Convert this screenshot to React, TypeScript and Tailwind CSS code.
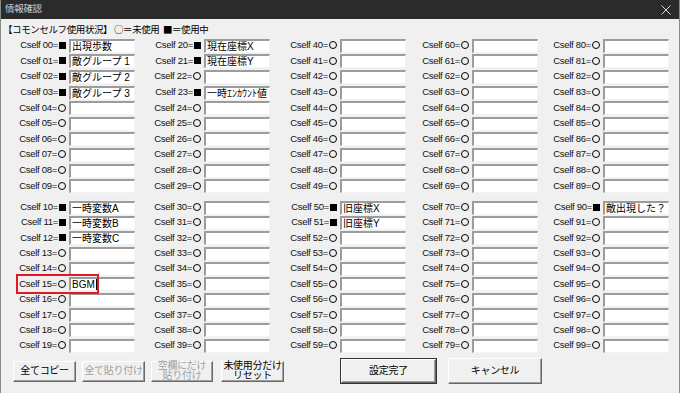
import React from "react";

const names: Record<number, string> = {
  0: "出現歩数",
  1: "敵グループ 1",
  2: "敵グループ 2",
  3: "敵グループ 3",
  10: "一時変数A",
  11: "一時変数B",
  12: "一時変数C",
  15: "BGM",
  20: "現在座標X",
  21: "現在座標Y",
  23: "一時ｴﾝｶｳﾝﾄ値",
  50: "旧座標X",
  51: "旧座標Y",
  90: "敵出現した？",
};

const used = new Set([0, 1, 2, 3, 10, 11, 12, 20, 21, 23, 50, 51, 90]);

const colWidths = ["w-[135px]", "w-[136px]", "w-[132px]", "w-[131px]", "w-[116px]"];

function Mark({ on }: { on: boolean }) {
  return on ? (
    <span className="inline-block shrink-0 w-[7px] h-[7px] bg-black ml-[1px]" />
  ) : (
    <span className="inline-block shrink-0 w-[8px] h-[8px] rounded-full border border-black ml-[1px]" />
  );
}

function Row({ n, h }: { n: number; h: string }) {
  const text = names[n];
  return (
    <div className={`flex items-center ${h}`}>
      <div className="w-[49px] shrink-0 flex items-center justify-end pr-[3px] text-[9.5px] leading-[12px] tracking-[-0.3px] text-[#111] whitespace-nowrap -mt-[1px]">
        <span>Cself {String(n).padStart(2, "0")}=</span>
        <Mark on={used.has(n)} />
      </div>
      <div className="w-[66px] h-[14px] shrink-0 bg-white border-t-2 border-l-2 border-t-[#9c9c9c] border-l-[#9c9c9c] border-b border-r border-b-[#f4f4f4] border-r-[#f4f4f4] pl-[1px] text-[10px] leading-[11px] text-black whitespace-nowrap overflow-hidden flex items-start">
        {text}
        {n === 15 && <span className="inline-block w-px h-[11px] bg-black ml-[1px]" />}
      </div>
    </div>
  );
}

function Group({ g, h }: { g: number; h: string }) {
  return (
    <div className="flex pl-[19px]">
      {[0, 1, 2, 3, 4].map((c) => (
        <div key={c} className={`flex flex-col shrink-0 ${colWidths[c]}`}>
          {Array.from({ length: 10 }, (_, r) => (
            <Row key={r} n={c * 20 + g * 10 + r} h={h} />
          ))}
        </div>
      ))}
    </div>
  );
}

function Btn({
  children,
  disabled,
  className,
}: {
  children: React.ReactNode;
  disabled?: boolean;
  className?: string;
}) {
  return (
    <div
      className={`flex flex-col items-center justify-center text-center whitespace-nowrap bg-[#f0f0f0] border-t border-l border-t-white border-l-white border-r border-b border-r-[#696969] border-b-[#696969] shadow-[inset_-1px_-1px_0_#a0a0a0] text-[10px] leading-[10px] tracking-[-0.3px] ${
        disabled ? "text-[#a0a0a0]" : "text-black"
      } ${className ?? ""}`}
    >
      {children}
    </div>
  );
}

export default function App() {
  return (
    <div className="relative w-[680px] h-[393px] overflow-hidden bg-[#f0f0f0] border-l border-r border-[#8a8a8a] font-['Liberation_Sans','Noto_Sans_CJK_JP',sans-serif]">
      {/* タイトルバー */}
      <div className="h-[19px] bg-[#2b2b2b] flex items-center justify-between pl-[4px] pr-[7px]">
        <span className="text-[9.5px] text-[#cfcfcf] tracking-[-0.3px]">情報確認</span>
        <svg width="10" height="10" viewBox="0 0 10 10" className="mr-[1px]">
          <path d="M0.5 0.5 L9.5 9.5 M9.5 0.5 L0.5 9.5" stroke="#d8d8d8" strokeWidth="1" />
        </svg>
      </div>

      {/* 凡例 */}
      <div className="h-[19px] pl-[2px] flex items-center font-['Noto_Sans_CJK_JP',sans-serif] text-[9.5px] leading-[14px] tracking-[-0.4px] text-black whitespace-pre">
        {"【コモンセルフ使用状況】 ○＝未使用  ■＝使用中"}
      </div>

      <Group g={0} h="h-[15.6px]" />
      <div className="h-[6px]" />
      <Group g={1} h="h-[15.35px]" />

      {/* ボタン */}
      <div className="flex items-center h-[30px] mt-[3px] pl-[12px]">
        <Btn className="w-[63px] h-[21px]">全てコピー</Btn>
        <Btn disabled className="w-[63px] h-[21px] ml-[6px]">全て貼り付け</Btn>
        <Btn disabled className="w-[62px] h-[21px] ml-[6px]">
          <span>空欄にだけ</span>
          <span>貼り付け</span>
        </Btn>
        <Btn className="w-[63px] h-[21px] ml-[8px]">
          <span>未使用分だけ</span>
          <span>リセット</span>
        </Btn>
        <div className="ml-[56px] border border-[#333]">
          <Btn className="w-[95px] h-[24px]">設定完了</Btn>
        </div>
        <Btn className="w-[94px] h-[26px] ml-[11px]">キャンセル</Btn>
      </div>

      {/* 強調枠 */}
      <div className="absolute left-[15px] top-[274px] w-[83px] h-[20px] border-2 border-[#e5191f]" />
    </div>
  );
}
